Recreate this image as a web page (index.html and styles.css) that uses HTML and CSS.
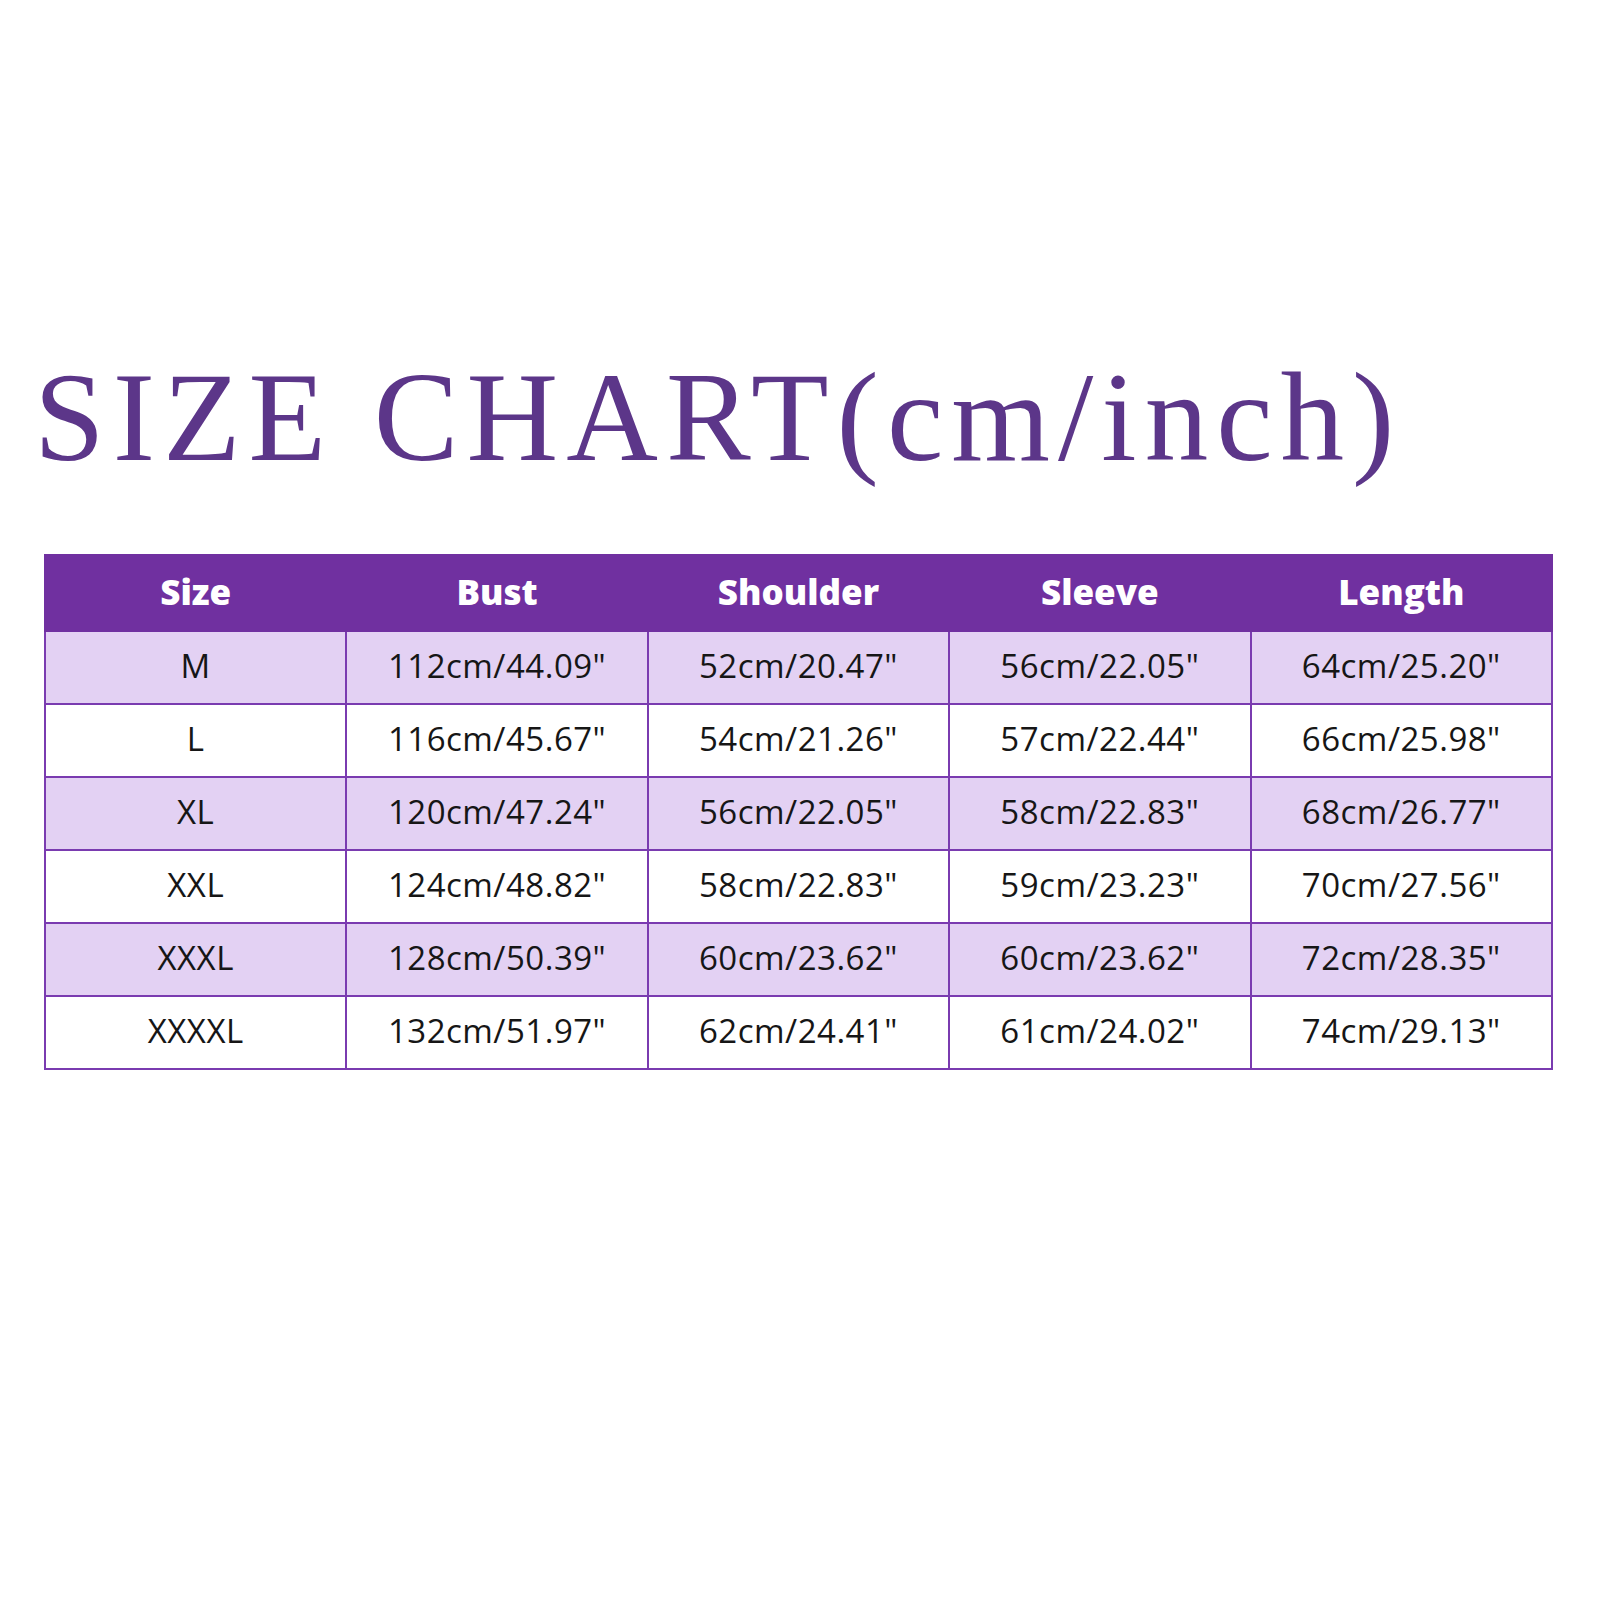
FILE: index.html
```html
<!DOCTYPE html>
<html>
<head>
<meta charset="utf-8">
<link rel="stylesheet" href="styles.css">
</head>
<body>
<div class="page">
  <h1 class="title">SIZE CHART(cm/inch)</h1>
  <table class="chart">
    <thead>
      <tr><th>Size</th><th>Bust</th><th>Shoulder</th><th>Sleeve</th><th>Length</th></tr>
    </thead>
    <tbody>
      <tr class="alt"><td>M</td><td>112cm/44.09"</td><td>52cm/20.47"</td><td>56cm/22.05"</td><td>64cm/25.20"</td></tr>
      <tr><td>L</td><td>116cm/45.67"</td><td>54cm/21.26"</td><td>57cm/22.44"</td><td>66cm/25.98"</td></tr>
      <tr class="alt"><td>XL</td><td>120cm/47.24"</td><td>56cm/22.05"</td><td>58cm/22.83"</td><td>68cm/26.77"</td></tr>
      <tr><td>XXL</td><td>124cm/48.82"</td><td>58cm/22.83"</td><td>59cm/23.23"</td><td>70cm/27.56"</td></tr>
      <tr class="alt"><td>XXXL</td><td>128cm/50.39"</td><td>60cm/23.62"</td><td>60cm/23.62"</td><td>72cm/28.35"</td></tr>
      <tr><td>XXXXL</td><td>132cm/51.97"</td><td>62cm/24.41"</td><td>61cm/24.02"</td><td>74cm/29.13"</td></tr>
    </tbody>
  </table>
</div>
</body>
</html>
```

FILE: styles.css
```css
html, body {
  margin: 0;
  padding: 0;
  background: #ffffff;
}

.page {
  padding: 354px 0 0 34px;
}

.title {
  margin: 0 0 73px 0;
  font-family: "Liberation Serif", "DejaVu Serif", serif;
  font-weight: normal;
  font-size: 127px;
  line-height: 127px;
  letter-spacing: 8px;
  color: #5c3689;
  white-space: nowrap;
}

.chart {
  margin-left: 10px;
  width: 1509px;
  border-collapse: collapse;
  table-layout: fixed;
  font-family: "Open Sans", "Noto Sans", sans-serif;
}

.chart th {
  height: 70px;
  padding: 0 0 4px 0;
  background: #7030a0;
  color: #ffffff;
  font-size: 35px;
  font-weight: 800;
  text-align: center;
  border: 2px solid #7030a0;
}

.chart td {
  height: 66px;
  padding: 0 0 5px 0;
  text-align: center;
  font-size: 33px;
  letter-spacing: 0.5px;
  color: #161616;
  border: 2px solid #7a3bb0;
  background: #ffffff;
}

.chart tr.alt td {
  background: #e3d1f3;
}
```
